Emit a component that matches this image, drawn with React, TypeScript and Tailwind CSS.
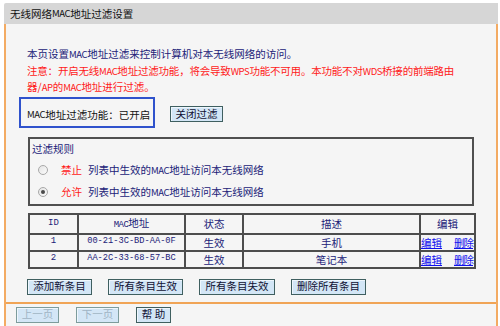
import React from 'react';

const CJK = { fontFamily: '"Noto Sans CJK SC", "Noto Sans", sans-serif' };

// narrow latin run inside CJK text (the original uses a bitmap font)
function L({ children }: { children: React.ReactNode }) {
  return <span className="text-[9.5px] leading-none tracking-[-0.4px]">{children}</span>;
}

function Btn({ children, w, disabled = false }: { children: React.ReactNode; w: string; disabled?: boolean }) {
  return (
    <div
      className={`${w} h-[16px] flex items-center justify-center border border-[#3f5f60] bg-[#d3e6f6] shadow-[inset_1px_1px_0_#eef6fd] text-[10.5px] leading-none ${
        disabled ? 'text-[#9fb4c4] border-[#7d9c9c]' : 'text-[#111133]'
      }`}
    >
      {children}
    </div>
  );
}

function Radio({ checked }: { checked?: boolean }) {
  return (
    <span className="w-[10px] h-[10px] rounded-full border border-[#a8a8a8] bg-gradient-to-br from-[#e4e4e4] to-[#fbfbfb] flex items-center justify-center">
      {checked && <span className="w-[4px] h-[4px] rounded-full bg-[#4a4a4a]" />}
    </span>
  );
}

const rows = [
  { id: '1', mac: '00-21-3C-BD-AA-0F', state: '生效', desc: '手机' },
  { id: '2', mac: 'AA-2C-33-68-57-BC', state: '生效', desc: '笔记本' },
];

export default function App() {
  return (
    <div className="w-[500px] h-[326px] bg-white pt-[3px] overflow-hidden" style={CJK}>
      <div className="ml-[4px] w-[494px]">
        <div className="h-[21px] bg-[#d6d6d6] rounded-tl-[2px] pl-[6px] flex items-center text-[10.5px] text-[#111]">
          无线网络<L>MAC</L>地址过滤设置
        </div>

        <div className="bg-[#f5f5f5] border-x-2 border-b-2 border-[#f3ab63]">
          <div className="pt-[22px] pl-[21px] text-[10.5px] leading-[16.5px]">
            <p className="text-[#222278]">
              本页设置<L>MAC</L>地址过滤来控制计算机对本无线网络的访问。
            </p>
            <div className="text-[#ff1a1a]">
              <p className="whitespace-nowrap tracking-[-0.2px]">
                注意：开启无线<L>MAC</L>地址过滤功能，将会导致<L>WPS</L>功能不可用。本功能不对<L>WDS</L>桥接的前端路由
              </p>
              <p>
                器/<L>AP</L>的<L>MAC</L>地址进行过滤。
              </p>
            </div>
          </div>

          <div className="flex mt-[1.5px] ml-[13px]">
            <div className="w-[136px] h-[31px] border-2 border-[#2f52cc] flex items-center pt-[5px] pl-[6px] text-[10.5px] text-[#111]">
              <L>MAC</L>地址过滤功能：已开启
            </div>
            <div className="ml-[15px] mt-[9px]">
              <Btn w="w-[53px]">关闭过滤</Btn>
            </div>
          </div>

          <div className="ml-[22px] mt-[9px] w-[446px] h-[69px] border-2 border-[#505050] text-[10.5px]">
            <div className="pl-[2px] pt-[2px] leading-[16px] text-[#222278]">过滤规则</div>
            <div className="mt-[2px] h-[22px] flex items-center pl-[8px]">
              <Radio />
              <span className="ml-[13px] text-[#ff1a1a]">禁止</span>
              <span className="ml-[6px] text-[#222278]">
                列表中生效的<L>MAC</L>地址访问本无线网络
              </span>
            </div>
            <div className="h-[22px] flex items-center pl-[8px]">
              <Radio checked />
              <span className="ml-[13px] text-[#ff1a1a]">允许</span>
              <span className="ml-[6px] text-[#222278]">
                列表中生效的<L>MAC</L>地址访问本无线网络
              </span>
            </div>
          </div>

          <table className="ml-[22px] mt-[7px] w-[446px] table-fixed border-collapse border-2 border-[#4d4d4d] text-[10.5px] text-[#222278]">
            <colgroup>
              <col className="w-[49px]" />
              <col className="w-[107px]" />
              <col className="w-[58px]" />
              <col className="w-[177px]" />
              <col className="w-[55px]" />
            </colgroup>
            <thead>
              <tr className="h-[19px]">
                <th className="border-2 border-[#4d4d4d] font-normal p-0 font-['Liberation_Mono'] text-[9px]">ID</th>
                <th className="border-2 border-[#4d4d4d] font-normal p-0">
                  <span className="font-['Liberation_Mono'] text-[9px] tracking-[-0.5px]">MAC</span>地址
                </th>
                <th className="border-2 border-[#4d4d4d] font-normal p-0">状态</th>
                <th className="border-2 border-[#4d4d4d] font-normal p-0">描述</th>
                <th className="border-2 border-[#4d4d4d] font-normal p-0">编辑</th>
              </tr>
            </thead>
            <tbody>
              {rows.map((r) => (
                <tr key={r.id} className="h-[17px]">
                  <td className="border-2 border-[#4d4d4d] p-0 text-center font-['Liberation_Mono'] text-[9px]">{r.id}</td>
                  <td className="border-2 border-[#4d4d4d] p-0 text-center font-['Liberation_Mono'] text-[8.7px]">{r.mac}</td>
                  <td className="border-2 border-[#4d4d4d] p-0 text-center leading-[13px]">{r.state}</td>
                  <td className="border-2 border-[#4d4d4d] p-0 text-center leading-[13px]">{r.desc}</td>
                  <td className="border-2 border-[#4d4d4d] p-0 leading-[13px]">
                    <div className="flex justify-between pr-[1px] text-[#1010ee] underline">
                      <span>编辑</span>
                      <span className="tracking-[-1px]">删除</span>
                    </div>
                  </td>
                </tr>
              ))}
            </tbody>
          </table>

          <div className="flex gap-[16px] ml-[21px] mt-[10px] mb-[7px]">
            <Btn w="w-[65px]">添加新条目</Btn>
            <Btn w="w-[75px]">所有条目生效</Btn>
            <Btn w="w-[76px]">所有条目失效</Btn>
            <Btn w="w-[75px]">删除所有条目</Btn>
          </div>

          <div className="border-t-2 border-[#f0a456] h-[24px] flex items-center pl-[10px] gap-[17px]">
            <Btn w="w-[43px]" disabled>
              上一页
            </Btn>
            <Btn w="w-[43px]" disabled>
              下一页
            </Btn>
            <Btn w="w-[35px]">帮 助</Btn>
          </div>
        </div>
      </div>
    </div>
  );
}
